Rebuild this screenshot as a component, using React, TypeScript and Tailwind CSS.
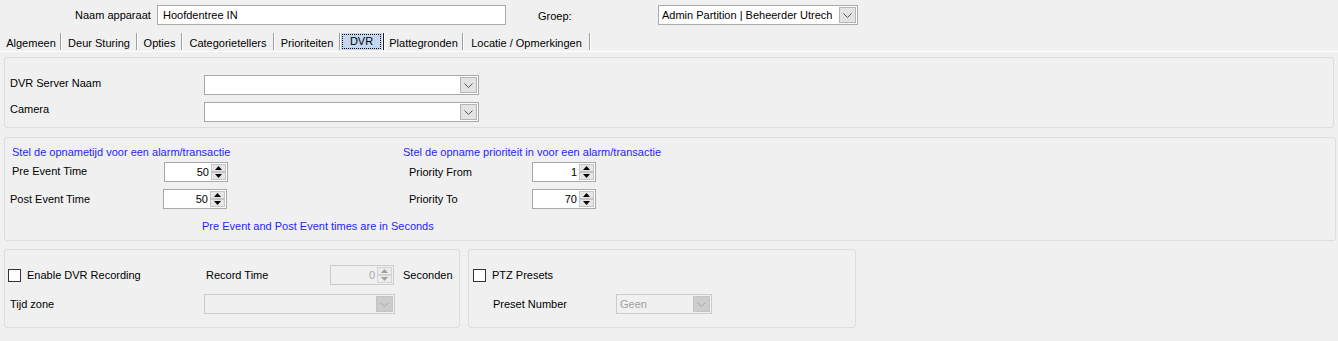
import React from "react";

const font = { fontFamily: '"Liberation Sans", Arial, sans-serif' };

function Chevron({ color = "#5a5a5a" }: { color?: string }) {
  return (
    <svg width="9" height="5" viewBox="0 0 9 5">
      <path d="M0.5 0.5 L4.5 4.5 L8.5 0.5" fill="none" stroke={color} strokeWidth="1" />
    </svg>
  );
}

function Combo({ width, text, disabled }: { width: string; text?: string; disabled?: boolean }) {
  return (
    <div
      className={`${width} h-[20px] flex items-center border ${
        disabled ? "border-[#cccccc] bg-[#f0f0f0]" : "border-[#a9a9a9] bg-white"
      }`}
    >
      <div className={`flex-1 pl-[3px] truncate ${disabled ? "text-[#a0a0a0]" : "text-black"}`}>{text}</div>
      <div
        className={`w-[17px] h-[16px] mr-px flex items-center justify-center border ${
          disabled ? "bg-[#cccccc] border-[#c4c4c4]" : "bg-[#e3e3e3] border-[#b4b4b4]"
        }`}
      >
        <Chevron color={disabled ? "#a8a8a8" : "#555555"} />
      </div>
    </div>
  );
}

function Spin({ value, disabled }: { value: string; disabled?: boolean }) {
  const arrow = disabled ? "#a0a0a0" : "#000000";
  return (
    <div
      className={`w-[64px] h-[20px] flex border ${
        disabled ? "border-[#cccccc] bg-[#f0f0f0]" : "border-[#a9a9a9] bg-white"
      }`}
    >
      <div className={`flex-1 flex items-center justify-end pr-[2px] ${disabled ? "text-[#a8a8a8]" : "text-black"}`}>
        {value}
      </div>
      <div className="w-[16px] flex flex-col py-px pr-px gap-0">
        <div className={`h-[8px] flex items-center justify-center border ${disabled ? "border-[#d4d4d4] bg-[#ececec]" : "border-[#c4c4c4] bg-[#e6e6e6]"}`}>
          <svg width="7" height="4" viewBox="0 0 7 4">
            <path d="M3.5 0 L7 4 L0 4 Z" fill={arrow} />
          </svg>
        </div>
        <div className={`h-[9px] flex items-center justify-center border ${disabled ? "border-[#d4d4d4] bg-[#ececec]" : "border-[#c4c4c4] bg-[#e6e6e6]"}`}>
          <svg width="7" height="4" viewBox="0 0 7 4">
            <path d="M0 0 L7 0 L3.5 4 Z" fill={arrow} />
          </svg>
        </div>
      </div>
    </div>
  );
}

function Check() {
  return <div className="w-[13px] h-[13px] border border-[#333333] bg-white" />;
}

const tabs = [
  { label: "Algemeen", w: "w-[60px]" },
  { label: "Deur Sturing", w: "w-[76px]" },
  { label: "Opties", w: "w-[45px]" },
  { label: "Categorietellers", w: "w-[92px]" },
  { label: "Prioriteiten", w: "w-[66px]" },
  { label: "DVR", w: "w-[44px]", active: true },
  { label: "Plattegronden", w: "w-[79px]" },
  { label: "Locatie / Opmerkingen", w: "w-[127px]" },
];

export default function App() {
  return (
    <div className="w-[1338px] h-[341px] bg-[#f0f0f0] text-[11px] leading-[14px] text-black overflow-hidden" style={font}>
      {/* top row */}
      <div className="h-[30px] flex items-center">
        <span className="ml-[75px] w-[82px]">Naam apparaat</span>
        <div className="w-[349px] h-[20px] border border-[#a9a9a9] bg-white flex items-center pl-[5px]">
          Hoofdentree IN
        </div>
        <span className="ml-[32px] w-[120px] mt-[2px]">Groep:</span>
        <Combo width="w-[200px]" text="Admin Partition | Beheerder Utrech" />
      </div>

      {/* tabs */}
      <div className="mt-[2px] h-[19px] flex pl-[2px]">
        {tabs.map((t) => (
          <div key={t.label} className={`${t.w} flex h-full`}>
            {t.active ? (
              <div className="flex-1 my-px mr-px bg-[#c3d7ee] p-px">
                <div className="h-full border border-dotted border-black flex items-center justify-center pb-px">
                  {t.label}
                </div>
              </div>
            ) : (
              <div className="flex-1 flex items-center justify-center pt-[2px]">{t.label}</div>
            )}
            <div className={`w-px my-px ${t.active ? "bg-[#1c1c3c]" : "bg-[#a0a0a0]"}`} />
            <div className="w-px my-px bg-white" />
          </div>
        ))}
      </div>
      <div className="h-px bg-white" />

      {/* DVR server panel */}
      <div className="mt-[5px] ml-[4px] w-[1330px] h-[71px] border border-[#d8dee3] rounded-[3px] pt-[17px] pl-[5px] flex flex-col gap-[7px]">
        <div className="flex items-center h-[20px]">
          <span className="w-[194px] -mt-[4px]">DVR Server Naam</span>
          <Combo width="w-[275px]" />
        </div>
        <div className="flex items-center h-[20px]">
          <span className="w-[194px] -mt-[6px]">Camera</span>
          <Combo width="w-[275px]" />
        </div>
      </div>

      {/* times panel */}
      <div className="mt-[9px] ml-[4px] w-[1332px] h-[104px] border border-[#d8dee3] rounded-[3px] pt-[7px] pl-[7px] flex flex-col">
        <div className="flex">
          <div className="w-[391px] flex flex-col">
            <div className="h-[14px] text-[#1f1fff]">Stel de opnametijd voor een alarm/transactie</div>
            <div className="mt-[3px] flex items-center h-[20px]">
              <span className="w-[152px] -mt-[2px]">Pre Event Time</span>
              <Spin value="50" />
            </div>
            <div className="mt-[7px] flex items-center h-[20px]">
              <span className="w-[152px] -ml-px pl-0 -mt-px">
                <span className="-ml-px">Post Event Time</span>
              </span>
              <Spin value="50" />
            </div>
          </div>
          <div className="flex flex-col">
            <div className="h-[14px] text-[#1f1fff]">Stel de opname prioriteit in voor een alarm/transactie</div>
            <div className="mt-[3px] flex items-center h-[20px] pl-[6px]">
              <span className="w-[123px]">Priority From</span>
              <Spin value="1" />
            </div>
            <div className="mt-[7px] flex items-center h-[20px] pl-[6px]">
              <span className="w-[123px]">Priority To</span>
              <Spin value="70" />
            </div>
          </div>
        </div>
        <div className="mt-[10px] pl-[190px] text-[#1f1fff]">Pre Event and Post Event times are in Seconds</div>
      </div>

      {/* bottom panels */}
      <div className="mt-[8px] ml-[4px] flex gap-[8px]">
        <div className="w-[456px] h-[79px] border border-[#d8dee3] rounded-[3px] pt-[15px] flex flex-col gap-[9px]">
          <div className="flex items-center h-[20px]">
            <div className="ml-[3px] w-[19px]">
              <Check />
            </div>
            <span className="w-[179px]">Enable DVR Recording</span>
            <span className="w-[124px]">Record Time</span>
            <Spin value="0" disabled />
            <span className="ml-[9px]">Seconden</span>
          </div>
          <div className="flex items-center h-[20px]">
            <span className="ml-[5px] w-[194px]">Tijd zone</span>
            <Combo width="w-[191px]" disabled />
          </div>
        </div>
        <div className="w-[388px] h-[79px] border border-[#d8dee3] rounded-[3px] pt-[15px] flex flex-col gap-[9px]">
          <div className="flex items-center h-[20px]">
            <div className="ml-[4px] w-[19px]">
              <Check />
            </div>
            <span>PTZ Presets</span>
          </div>
          <div className="flex items-center h-[20px]">
            <span className="ml-[24px] w-[123px]">Preset Number</span>
            <Combo width="w-[96px]" text="Geen" disabled />
          </div>
        </div>
      </div>
    </div>
  );
}
